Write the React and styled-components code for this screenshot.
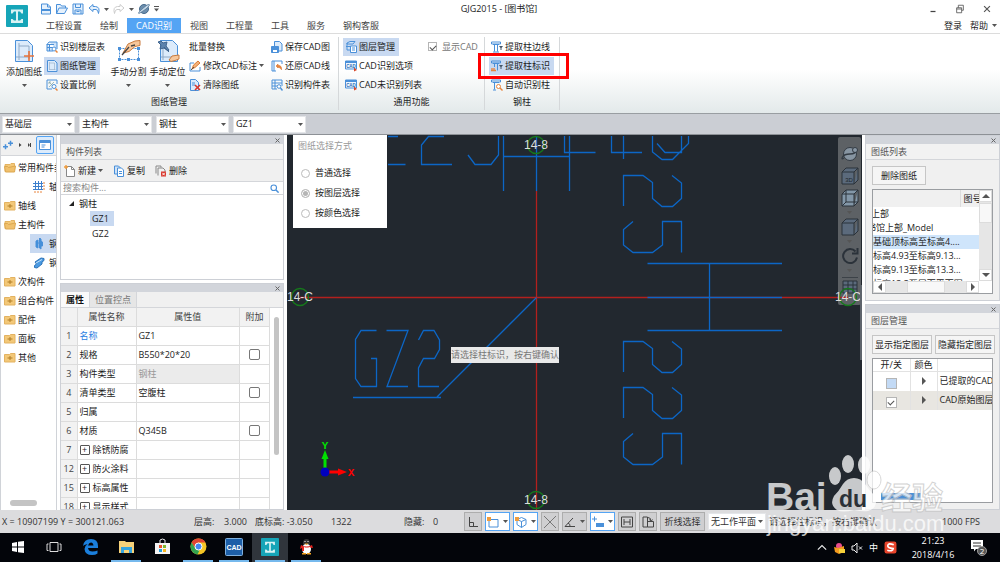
import React from 'react'
import styled, { createGlobalStyle, css } from 'styled-components';

const GlobalStyle = createGlobalStyle`
    * {
        box-sizing: border-box;
    }

    body {
        margin: 0;
        overflow: hidden;
        background: #fff;
        color: #1c1c1c;
        font-family: "Open Sans", "Noto Sans CJK SC", sans-serif;
        font-size: 9px;
        line-height: 12px;
    }

    button, input, select, table {
        font: inherit;
        color: inherit;
    }

    button {
        padding: 0;
        border: 0;
        background: none;
        white-space: nowrap;
    }

    svg {
        display: block;
        flex: none;
    }
`;

const Window = styled.div`
    position: relative;
    display: grid;
    grid-template-rows: 34px 79px 22px minmax(0, 1fr) 23px 29px;
    grid-template-columns: minmax(0, 1fr);
    height: 100vh;
    overflow: hidden;
`;

/* ---------- icons ---------- */

const Svg = ({ size = 12, box = 12, children }) => (
    <svg width={size} height={size} viewBox={`0 0 ${box} ${box}`} fill="none" stroke="#4a90d9" aria-hidden="true">
        {children}
    </svg>
);

const Caret = () => (
    <svg width="5" height="3" viewBox="0 0 5 3" aria-hidden="true"><path d="M0 0h5L2.500 3z" fill="#555" /></svg>
);

const CloseMark = () => (
    <svg width="5" height="5" viewBox="0 0 5 5" aria-hidden="true"><path d="M.5 .5l4 4M4.500 .5l-4 4" stroke="#666" /></svg>
);

const icons = {
    create: <Svg><path d="M1.500 1h6l3 3v7h-9zM7.500 1v3h3" fill="#e6f1fc" /><path d="M1.500 7h9" strokeWidth="2" /></Svg>,
    open: <Svg><path d="M.5 10.500v-9h4l1 1.500h4v2M.5 10.500l2.500-5.500h8.500l-3 5.500z" fill="#e6f1fc" /></Svg>,
    save: <Svg><path d="M1 1h10v10H1z" fill="#e6f1fc" /><path d="M3.500 1v3.500h5V1M3 11V7h6v4M4.500 8.500h3" /></Svg>,
    undo: <Svg><path d="M5 1.500L1 5l4 3.500V6.500h3q2 0 2.500 4q2-6.500-3-7H5z" fill="#e6f1fc" /></Svg>,
    redo: <Svg><path d="M7 1.500L11 5 7 8.500V6.500H4q-2 0-2.500 4Q-.5 4 4.500 3.500H7z" stroke="#ccc" /></Svg>,
    orbit: <Svg><circle cx="6" cy="6" r="4.500" fill="#6d8fae" stroke="#466a8c" /><path d="M2 10Q0 11 .7 9.500T9 2Q12.500 .5 11 3T2 10z" fill="#c4d8e8" stroke="#466a8c" strokeWidth=".7" /></Svg>,
    floorTable: <Svg><path d="M3 1h8v7M1 3.500h7M1 3v7h6M3 1L1 3.500M3.500 4v6M1 6.500h6" fill="#cfe2f7" /><circle cx="8" cy="8" r="2" fill="#fff" /><path d="M9.500 9.500L11.500 11.500" stroke="#e8843c" strokeWidth="1.500" /></Svg>,
    sheet: <Svg><path d="M1.500 .5h7l2.500 2.500v8.500h-9.500z" fill="#dcebfb" /><path d="M3.500 2v8M3.500 9.500h6M3.500 3h5v7" stroke="#9cb3cc" strokeWidth=".7" /></Svg>,
    scale: <Svg><path d="M11 5V1H1v9h5" /><path d="M3 3l5 5M3 3h2M3 3v2M8 3L3 8" stroke="#8aa" strokeWidth=".8" /><circle cx="8" cy="7.500" r="2" fill="#fff" /><path d="M9.500 9.500l2 2" stroke="#e8843c" strokeWidth="1.500" /></Svg>,
    edit: <Svg><path d="M1 3v8h10V7M1 3h4" /><path d="M3 9l1.500-4L9 1l2 2-5 4.500z" fill="#f3b27b" stroke="#d97a35" /><path d="M2 10l3-3" stroke="#555" /></Svg>,
    clear: <Svg><path d="M1.500 .5h5l3 3v8h-8z" fill="#dcebfb" /><path d="M3 4h3M3 6h3" /><path d="M6 6l5 5M11 6l-5 5" stroke="#d9362b" strokeWidth="1.600" /></Svg>,
    saveCad: <Svg><path d="M3.500 5V.5h5l2.500 2.500v7H8" fill="#dcebfb" /><path d="M.5 5.500h7v6h-7z" fill="#4a90d9" /><path d="M2 9h4v2H2z" fill="#fff" stroke="none" /></Svg>,
    restore: <Svg><path d="M11 4V1H1v10h4M3 1v10" /><path d="M5 6l2-2v1.300q4 0 3.500 4.500-1-2.500-3.500-2.500V8z" fill="#e8843c" stroke="#d97a35" strokeWidth=".6" /></Svg>,
    memberTable: <Svg><path d="M1 1h10v6M1 1v9h5M1 4h10M1 7h5M4 1v9" /><circle cx="8" cy="7.500" r="1.800" fill="#fff" /><path d="M9.500 9l2 2.500" stroke="#4a90d9" strokeWidth="1.500" /></Svg>,
    layers: <Svg><path d="M2 2l3-1.500h5L8 3H2zM2 2v7h3M1 5.500h4" fill="#cfe2f7" /><path d="M5.500 5h6v6.500h-6zM7 7h3M7 9h3" fill="#fff" /></Svg>,
    cad: (
        <Svg>
            <path d="M.5 1h11v8H.5z" fill="#eef6ff" />
            <path d="M.5 2h11" strokeWidth="2" />
            <text x="6" y="7.800" textAnchor="middle" fontFamily="Liberation Sans" fontSize="4.500" fontWeight="700" fill="#2b6cb5" stroke="none">CAD</text>
            <path d="M9 7.500l3 2.500-3 1.500z" fill="#d9482b" stroke="none" />
        </Svg>
    ),
    columnEdge: <Svg><path d="M.5 1h9v2h-9zM2 3.500h6M3.500 4v6.500M6.500 4v6.500M2 11h6" /><path d="M8 5h4L10.500 7v2h-1V7z" fill="#456" stroke="none" /></Svg>,
    columnTag: <Svg><path d="M.5 1h9v2h-9zM2 3.500h6M3.500 4v3M6.500 4v6.500" /><path d="M0 10.500h5M1 8v3M3 8v3" stroke="#e8843c" strokeWidth="1.300" /><path d="M8 5h4L10.500 7v2h-1V7z" fill="#456" stroke="none" /></Svg>,
    columnAuto: <Svg><path d="M.5 1h9v2h-9zM2 3.500h6M3.500 4v6.500M2 11h3" /><circle cx="7.500" cy="7.500" r="2" fill="#fff" stroke="#e8843c" /><path d="M9 9l2.500 2.500" stroke="#e8843c" strokeWidth="1.400" /></Svg>,
    folder: <Svg><path d="M.5 2.500h5l1-1h4.500v8.500H.5z" fill="#f3c878" stroke="#e3b261" /><path d="M3.500 6h5M6 4v4" stroke="#b07c24" /></Svg>,
    folderOpen: <Svg><path d="M1 9.500V2.500h5l1-1h3.500v2.500" fill="#f3c878" stroke="#e3b261" /><path d="M.5 4.500h3l1 1 7-1.500-1 6h-9z" fill="#f0c06c" stroke="#dca750" /></Svg>,
    grid: <Svg><path d="M0 2.500h10M0 5.500h10M0 8.500h10M2.500 0v9M5.500 0v9M8.500 0v9" stroke="#3d7fcc" /><path d="M11 1v9M1 11h9" stroke="#e8843c" strokeDasharray="2 1" /></Svg>,
    column: <Svg><path d="M3 3l2-1v8l-2-1zM5 5h1.500M6.500 0l1.500 1v10l-1.500-1zM8 3l1.500 1v4L8 8z" fill="#3d8fdc" /></Svg>,
    beam: <Svg><path d="M2 5l6-4 3 .5v2L9 5v2l-5 4-2.500-.5v-2L3.500 7z" fill="#4b9be3" stroke="#2d73b8" /><path d="M3 6l6-3.500" stroke="#fff" strokeWidth=".7" /></Svg>,
    fresh: <Svg><path d="M2.500 1.500h5l3 3v7h-8z" stroke="#888" fill="#fff" /><path d="M7.500 1.500v3h3" stroke="#888" /><path d="M0 2h4M2 0v4" stroke="#ef9c3e" strokeWidth="1.400" /></Svg>,
    copy: <Svg><path d="M1.500 1h4l2 2v6h-6z" fill="#cfe2f7" /><path d="M4.500 3h4l2 2v6.500h-6zM6 6.500h3M6 8.500h3" fill="#fff" /></Svg>,
    remove: <Svg><path d="M1 8.500V1h5v1.500M3 10.500V3h5l2 2v2" stroke="#888" /><path d="M6 6.500h5v5H6z" fill="#d9362b" stroke="none" /><path d="M7.300 7.800l2.500 2.500M9.800 7.800L7.300 10.300" stroke="#fff" /></Svg>,
};

/* ---------- title bar ---------- */

const Header = styled.header`
    display: flex;
    border-bottom: 1px solid #dcdcdc;
`;

const Brand = styled.div`
    width: 34px;
    padding: 5px 6px;
`;

const HeaderMain = styled.div`
    flex: 1;
    display: grid;
    grid-template-rows: 18px 15px;
    min-width: 0;
`;

const TitleRow = styled.div`
    display: grid;
    grid-template-columns: 1fr auto 1fr;
    align-items: center;
    padding-right: 8px;
`;

const QuickAccess = styled.div`
    display: flex;
    align-items: center;
    gap: 4px;
    padding-left: 6px;
`;

const IconButton = styled.button`
    display: grid;
    place-items: center;
`;

const Title = styled.h1`
    margin: 0 28px 0 0;
    font-size: 9px;
    font-weight: 400;
`;

const WindowButtons = styled.div`
    display: flex;
    justify-content: flex-end;
    gap: 17px;
`;

const TabRow = styled.nav`
    display: flex;
    padding-left: 3px;
`;

const Tab = styled.button`
    height: 15px;
    padding: 0 9px;
    background: ${({ $active }) => ($active ? '#54a4f4' : 'transparent')};
    color: ${({ $active }) => ($active ? '#fff' : '#444')};
`;

const Account = styled.div`
    display: flex;
    align-items: center;
    gap: 8px;
    margin-left: auto;
    padding-right: 3px;

    button {
        display: flex;
        align-items: center;
        gap: 4px;
    }
`;

const BrandLogo = ({ size = 22 }) => (
    <svg width={size} height={size} viewBox="0 0 22 22" aria-hidden="true">
        <rect width="22" height="22" rx="1" fill="#16a5b8" />
        <path d="M5 4.500h12v4h-1.500L14 6.500h-2v9h2l1.500-1.500H17v4H5v-4h1.500L8 15.500h2v-9H8L6.500 8.500H5z" fill="#d9f3f4" />
    </svg>
);

const tabs = ['工程设置', '绘制', 'CAD识别', '视图', '工程量', '工具', '服务', '钢构客服'];

const TitleBar = () => (
    <Header>
        <Brand><BrandLogo /></Brand>
        <HeaderMain>
            <TitleRow>
                <QuickAccess>
                    <IconButton aria-label="新建">{icons.create}</IconButton>
                    <IconButton aria-label="打开">{icons.open}</IconButton>
                    <IconButton aria-label="保存">{icons.save}</IconButton>
                    <IconButton aria-label="撤销">{icons.undo}</IconButton>
                    <Caret />
                    <IconButton aria-label="重做">{icons.redo}</IconButton>
                    <Caret />
                    <IconButton aria-label="动态观察">{icons.orbit}</IconButton>
                    <svg width="5" height="6" viewBox="0 0 5 6" aria-hidden="true"><path d="M0 0h5v1H0zM0 2.500h5L2.500 5.500z" fill="#555" /></svg>
                </QuickAccess>
                <Title>GJG2015 - [图书馆]</Title>
                <WindowButtons>
                    <IconButton aria-label="最小化"><Svg size={10}><path d="M3 9h6" stroke="#444" strokeWidth="1.500" /></Svg></IconButton>
                    <IconButton aria-label="还原"><Svg size={10}><path d="M2 4.500h6v6H2zM4 4.500V1.500h6v6H8M2 6h6" stroke="#555" /></Svg></IconButton>
                    <IconButton aria-label="关闭"><Svg size={10}><path d="M2.500 2.500l7 7M9.500 2.500l-7 7" stroke="#555" strokeWidth="1.400" /></Svg></IconButton>
                </WindowButtons>
            </TitleRow>
            <TabRow>
                {tabs.map(t => <Tab key={t} $active={t === 'CAD识别'}>{t}</Tab>)}
                <Account>
                    <button>登录</button>
                    <button>帮助 <Caret /></button>
                </Account>
            </TabRow>
        </HeaderMain>
    </Header>
);

/* ---------- ribbon ---------- */

const RibbonBar = styled.div`
    display: flex;
    padding-top: 3px;
    background: linear-gradient(#fff 45%, #e3e9ea);
`;

const Group = styled.section`
    display: grid;
    grid-template-rows: 57px 16px;
    padding: 0 4px;
    border-right: 1px solid #d5d8da;
    height: 73px;
`;

const GroupBody = styled.div`
    display: flex;
`;

const GroupName = styled.div`
    text-align: center;
    line-height: 16px;
`;

const Stack = styled.div`
    display: grid;
    grid-template-rows: repeat(3, 19px);
    justify-items: start;
    align-items: center;
    width: ${({ $width }) => $width}px;
`;

const Command = styled.button`
    position: relative;
    display: flex;
    align-items: center;
    gap: 2px;
    height: 18px;
    padding: 0 4px 0 2px;
    background: ${({ $on }) => ($on ? '#c8d9f1' : 'transparent')};
`;

const BigCommand = styled.button`
    display: grid;
    grid-template-rows: 28px 14px 12px;
    place-items: center;
    align-content: start;
    width: ${({ $width }) => $width || 39}px;
`;

const CheckLabel = styled.label`
    display: flex;
    align-items: center;
    gap: 5px;
    height: 19px;
    padding-right: 2px;
    color: #777;
`;

const CheckBox = styled.input.attrs({ type: 'checkbox' })`
    appearance: none;
    display: grid;
    place-items: center;
    width: ${({ $size }) => $size || 9}px;
    height: ${({ $size }) => $size || 9}px;
    margin: 0;
    border: 1px solid ${({ $round }) => ($round ? '#777' : '#b5b5b5')};
    border-radius: ${({ $round }) => ($round ? 2 : 0)}px;
    background: ${({ $fill }) => $fill || '#fff'};

    &:checked::after {
        content: "";
        width: 5px;
        height: 3px;
        border-left: 1px solid #555;
        border-bottom: 1px solid #555;
        transform: rotate(-45deg);
    }
`;

// red frame drawn round the command that the tutorial step points at
const Callout = styled.span`
    position: absolute;
    inset: -4px -15px -4px -11px;
    border: 3px solid #f00;
    pointer-events: none;
`;

const RibbonCommand = ({ icon, label, on, menu, marked }) => (
    <Command $on={on}>
        {icon && icons[icon]}
        {label}
        {menu && <Caret />}
        {marked && <Callout />}
    </Command>
);

const Ribbon = () => (
    <RibbonBar>
        <Group>
            <GroupBody>
                <BigCommand $width={40}>
                    <Svg size={24} box={24}>
                        <path d="M3.500 1.500h12l5 5v16h-17z" fill="#dcebfb" />
                        <path d="M7 4v17M4 18h14M7 7h10v13" stroke="#8fa9c6" />
                        <path d="M17 12v10M12 17h10" stroke="#e8743c" strokeWidth="1.600" />
                    </Svg>
                    添加图纸
                    <Caret />
                </BigCommand>
                <Stack $width={65}>
                    <RibbonCommand icon="floorTable" label="识别楼层表" />
                    <RibbonCommand icon="sheet" label="图纸管理" on />
                    <RibbonCommand icon="scale" label="设置比例" />
                </Stack>
                <BigCommand>
                    <Svg size={24} box={24}>
                        <path d="M2.500 9.500h19v11h-19z" strokeDasharray="2 1" />
                        <path d="M1 8h3v3H1zM20 8h3v3h-3zM1 19h3v3H1zM20 19h3v3h-3zM10 19h3v3h-3z" fill="#4a90d9" stroke="none" />
                        <path d="M6 14l5-9 7-3 5-.5v5l-5 1-6 5z" fill="#f6c79c" stroke="#c97b3e" />
                        <path d="M5 16l7-8M14 7l4-1" stroke="#444" strokeWidth="1.300" />
                    </Svg>
                    手动分割
                    <Caret />
                </BigCommand>
                <BigCommand>
                    <Svg size={24} box={24}>
                        <path d="M4.500 1.500h12l5 5v16h-17z" fill="#dcebfb" />
                        <path d="M7 5v16M5 18h14" stroke="#8fa9c6" />
                        <path d="M2 3l3-1 2 2 4-1-1 4 3 4-1 1-4-3-4 1 1-4z" fill="#5d83ad" stroke="#3f648e" />
                        <path d="M8 8l5 5" stroke="#3f648e" />
                        <path d="M13 21l3-4 7-1v4l-4 1.500-4 1z" fill="#f6c79c" stroke="#c97b3e" />
                    </Svg>
                    手动定位
                    <Caret />
                </BigCommand>
                <Stack $width={82}>
                    <RibbonCommand label="批量替换" />
                    <RibbonCommand icon="edit" label="修改CAD标注" menu />
                    <RibbonCommand icon="clear" label="清除图纸" />
                </Stack>
                <Stack $width={65}>
                    <RibbonCommand icon="saveCad" label="保存CAD图" />
                    <RibbonCommand icon="restore" label="还原CAD线" />
                    <RibbonCommand icon="memberTable" label="识别构件表" />
                </Stack>
            </GroupBody>
            <GroupName>图纸管理</GroupName>
        </Group>
        <Group>
            <GroupBody>
                <Stack $width={85}>
                    <RibbonCommand icon="layers" label="图层管理" on />
                    <RibbonCommand icon="cad" label="CAD识别选项" />
                    <RibbonCommand icon="cad" label="CAD未识别列表" />
                </Stack>
                <CheckLabel><CheckBox defaultChecked disabled />显示CAD</CheckLabel>
            </GroupBody>
            <GroupName>通用功能</GroupName>
        </Group>
        <Group>
            <GroupBody>
                <Stack $width={66}>
                    <RibbonCommand icon="columnEdge" label="提取柱边线" />
                    <RibbonCommand icon="columnTag" label="提取柱标识" on marked />
                    <RibbonCommand icon="columnAuto" label="自动识别柱" />
                </Stack>
            </GroupBody>
            <GroupName>钢柱</GroupName>
        </Group>
    </RibbonBar>
);

/* ---------- selector bar ---------- */

const SelectorBar = styled.div`
    display: flex;
    align-items: center;
    gap: 4px;
    padding: 0 2px;
    border-top: 1px solid #999ea2;
    border-bottom: 1px solid #8d9196;
    background: #cbced4;
`;

const SelectBox = styled.span`
    position: relative;
    width: ${({ $width }) => $width}px;

    select {
        appearance: none;
        display: block;
        width: 100%;
        height: 17px;
        padding: 0 8px 0 2px;
        border: 1px solid #e4e6e9;
        border-radius: 0;
        background: #fff;
    }

    svg {
        position: absolute;
        right: 3px;
        top: 7px;
        pointer-events: none;
    }
`;

const Select = ({ value, label, width = 73 }) => (
    <SelectBox $width={width}>
        <select aria-label={label}><option>{value}</option></select>
        <Caret />
    </SelectBox>
);

/* ---------- workspace ---------- */

const Workspace = styled.main`
    display: grid;
    grid-template-columns: 57px 224px minmax(0, 1fr) 135px;
    grid-template-rows: minmax(0, 1fr);
    column-gap: 3px;
    background: #fff;
`;

const Nav = styled.nav`
    display: flex;
    flex-direction: column;
    border-left: 1px solid #d0d3d8;
    border-right: 1px solid #d0d3d8;
    overflow: hidden;
`;

const NavTop = styled.div`
    display: flex;
    align-items: center;
    justify-content: space-between;
    height: 21px;
    padding: 0 2px;
    border-bottom: 1px solid #d4d6da;
    background: #f0f0f0;
`;

const NavToggle = styled.button`
    padding: 2px;
    border: 1px solid #54a4f4;
    border-radius: 2px;
    background: #dcebfb;
`;

const NavList = styled.ul`
    flex: 1;
    margin: 0;
    padding: 2px 0 0;
    list-style: none;
`;

const NavItem = styled.li`
    display: flex;
    align-items: center;
    gap: ${({ $child }) => ($child ? 4 : 2)}px;
    height: 19px;
    margin-left: ${({ $child }) => ($child ? 29 : 0)}px;
    padding-left: 3px;
    background: ${({ $on }) => ($on ? '#c8d9f1' : 'transparent')};
    white-space: nowrap;
`;

const HorizontalThumb = styled.div`
    width: 27px;
    height: 6px;
    margin: 0 0 4px 9px;
    border-radius: 3px;
    background: #c4c4c4;
`;

const navItems = [
    ['folderOpen', '常用构件类型'],
    ['grid', '轴网', 'child'],
    ['folder', '轴线'],
    ['folderOpen', '主构件'],
    ['column', '钢柱', 'child', 'on'],
    ['beam', '钢梁', 'child'],
    ['folder', '次构件'],
    ['folder', '组合构件'],
    ['folder', '配件'],
    ['folder', '面板'],
    ['folder', '其他'],
];

const Side = styled.div`
    display: flex;
    flex-direction: column;
    gap: 3px;
    min-width: 0;
    overflow: hidden;
`;

const Panel = styled.section`
    display: flex;
    flex-direction: column;
    flex: ${({ $height }) => ($height ? `none` : `1`)};
    height: ${({ $height }) => ($height ? `${$height}px` : 'auto')};
    min-height: 0;
    border: 1px solid #cdd0d6;
    background: ${({ $grey }) => ($grey ? '#f0f0f0' : '#fff')};
`;

const PanelGrip = styled.div`
    display: flex;
    justify-content: flex-end;
    align-items: center;
    height: 8px;
    padding-right: 3px;
    background: #d2d5db;
`;

const PanelTitle = styled.h2`
    height: 16px;
    margin: 0;
    padding-left: 5px;
    border-bottom: 1px solid #d4d6da;
    background: #f2f2f2;
    color: #555;
    font-size: 9px;
    font-weight: 400;
    line-height: 15px;
`;

const ToolRow = styled.div`
    display: flex;
    align-items: center;
    gap: 10px;
    height: 21px;
    padding-left: 3px;
    background: #f0f0f0;

    button {
        display: flex;
        align-items: center;
        gap: 2px;
    }
`;

const SearchRow = styled.label`
    display: flex;
    align-items: center;
    height: 14px;
    padding-right: 4px;
    border: solid #d4d6da;
    border-width: 1px 0;

    input {
        flex: 1;
        min-width: 0;
        height: 12px;
        padding: 0 2px;
        border: 0;
        outline: 0;
    }

    input::placeholder {
        color: #888;
    }
`;

const Tree = styled.ul`
    margin: 0;
    padding: 1px 0 0 6px;
    list-style: none;
    line-height: 15px;

    ul {
        margin: 0;
        padding: 0 0 0 23px;
        list-style: none;
    }
`;

const TreeNode = styled.span`
    display: inline-flex;
    align-items: center;
    gap: 5px;
    height: 15px;
    padding: 0 5px 0 2px;
    background: ${({ $on }) => ($on ? '#c8d9f1' : 'transparent')};
    vertical-align: top;
`;

const PropertyTabs = styled.div`
    display: flex;
    height: 16px;
    background: #f0f0f0;
    border-bottom: 1px solid #d4d6da;
`;

const PropertyTab = styled.button`
    padding: 0 5px;
    border-right: 1px solid #d4d6da;
    background: ${({ $active }) => ($active ? '#fafafa' : '#e6e6e6')};
    color: ${({ $active }) => ($active ? '#111' : '#777')};
    font-weight: ${({ $active }) => ($active ? 600 : 400)};
`;

const PropertyBody = styled.div`
    display: flex;
    flex: 1;
    min-height: 0;
    overflow: hidden;
`;

const PropertyTable = styled.table`
    flex: 1;
    align-self: flex-start;
    table-layout: fixed;
    border-collapse: collapse;

    th, td {
        height: 19px;
        padding: 0 2px;
        border: 1px solid #dcdcdc;
        border-left: 0;
        text-align: left;
        font-weight: 400;
    }

    thead th {
        height: 18px;
        border-top: 0;
        background: #f2f2f2;
        text-align: center;
        color: #444;
    }

    tbody th {
        background: #f2f2f2;
        text-align: center;
        color: #444;
    }

    td input {
        margin: 0 auto;
    }
`;

const NameCell = styled.td`
    color: ${({ $link }) => ($link ? '#2a7de1' : 'inherit')};

    span {
        display: flex;
        align-items: center;
        gap: 3px;
    }
`;

const ValueCell = styled.td`
    ${({ $readOnly }) => $readOnly && css`
        background: #ebebeb;
        color: #999;
    `}
`;

const Expander = styled.button`
    width: 10px;
    height: 10px;
    border: 1px solid #555;
    border-radius: 1px;
    line-height: 7px;
`;

const ScrollTrack = styled.div`
    width: 13px;
    padding: 9px 4px;

    &::after {
        content: "";
        display: block;
        height: 138px;
        border-radius: 3px;
        background: #c4c4c4;
    }
`;

const properties = [
    { no: 1, name: '名称', value: 'GZ1', link: true },
    { no: 2, name: '规格', value: 'B550*20*20', extra: true },
    { no: 3, name: '构件类型', value: '钢柱', readOnly: true },
    { no: 4, name: '清单类型', value: '空腹柱', extra: true },
    { no: 5, name: '归属', value: '' },
    { no: 6, name: '材质', value: 'Q345B', extra: true },
    { no: 7, name: '除锈防腐', group: true },
    { no: 12, name: '防火涂料', group: true },
    { no: 15, name: '标高属性', group: true },
    { no: 18, name: '显示样式', group: true },
];

const Components = () => (
    <Side>
        <Panel $height={145}>
            <PanelGrip><CloseMark /></PanelGrip>
            <PanelTitle>构件列表</PanelTitle>
            <ToolRow>
                <button>{icons.fresh}新建 <Caret /></button>
                <button>{icons.copy}复制</button>
                <button>{icons.remove}删除</button>
            </ToolRow>
            <SearchRow>
                <input placeholder="搜索构件..." aria-label="搜索构件" />
                <Svg size={9}><circle cx="5" cy="5" r="3.700" strokeWidth="1.500" /><path d="M8 8l3.500 3.500" strokeWidth="2" /></Svg>
            </SearchRow>
            <Tree>
                <li>
                    <TreeNode>
                        <svg width="5" height="5" viewBox="0 0 5 5" aria-hidden="true"><path d="M5 0v5H0z" fill="#222" /></svg>
                        钢柱
                    </TreeNode>
                    <ul>
                        <li><TreeNode $on>GZ1</TreeNode></li>
                        <li><TreeNode>GZ2</TreeNode></li>
                    </ul>
                </li>
            </Tree>
        </Panel>
        <Panel>
            <PanelGrip><CloseMark /></PanelGrip>
            <PropertyTabs>
                <PropertyTab $active>属性</PropertyTab>
                <PropertyTab>位置控点</PropertyTab>
            </PropertyTabs>
            <PropertyBody>
                <PropertyTable>
                    <colgroup>
                        <col width="16" />
                        <col width="59" />
                        <col />
                        <col width="30" />
                    </colgroup>
                    <thead>
                        <tr><th></th><th>属性名称</th><th>属性值</th><th>附加</th></tr>
                    </thead>
                    <tbody>
                        {properties.map(p => (
                            <tr key={p.no}>
                                <th>{p.no}</th>
                                <NameCell $link={p.link}>
                                    <span>{p.group && <Expander aria-label="展开">+</Expander>}{p.name}</span>
                                </NameCell>
                                <ValueCell $readOnly={p.readOnly}>{p.value}</ValueCell>
                                <td>{p.extra && <CheckBox $round $size={11} aria-label={`附加 ${p.name}`} />}</td>
                            </tr>
                        ))}
                    </tbody>
                </PropertyTable>
                <ScrollTrack />
            </PropertyBody>
        </Panel>
    </Side>
);

/* ---------- drawing canvas ---------- */

const Canvas = styled.section`
    position: relative;
    overflow: hidden;
    background: #22282f;
`;

const ModelView = styled.svg`
    position: absolute;
    inset: 0;
    width: 100%;
    height: 100%;
`;

const SelectionMode = styled.fieldset`
    position: absolute;
    left: 6px;
    top: 0;
    display: grid;
    gap: 8px;
    width: 94px;
    height: 93px;
    align-content: start;
    margin: 0;
    padding: 5px 5px 0;
    border: 0;
    background: #fff;
`;

const ModeTitle = styled.div`
    height: 19px;
    color: #999;
`;

const Mode = styled.label`
    display: flex;
    align-items: center;
    gap: 5px;
    height: 12px;
    padding-left: 3px;
`;

const Radio = styled.input.attrs({ type: 'radio', name: 'mode' })`
    appearance: none;
    width: 9px;
    height: 9px;
    margin: 0;
    border: 1px solid #bbb;
    border-radius: 50%;

    &:checked {
        background: #b5b5b5;
        box-shadow: inset 0 0 0 1px #fff;
    }
`;

const CursorTip = styled.div`
    position: absolute;
    left: 164px;
    top: 212px;
    height: 16px;
    background: #e9e9e9;
    color: #777;
    line-height: 16px;
    white-space: nowrap;
`;

const ViewTools = styled.div`
    position: absolute;
    right: 1px;
    top: 2px;
    display: grid;
    justify-items: center;
    align-content: start;
    gap: 4px;
    width: 23px;
    height: 168px;
    padding-top: 8px;
    border-radius: 2px;
    background: #5d6165;
`;

const EdgeHandle = styled.i`
    position: absolute;
    top: 150px;
    ${({ $side }) => $side}: 0;
    width: 2px;
    height: 75px;
    background: #5f656d;
`;

const Cube = ({ light, label }) => (
    <Svg size={18} box={18}>
        <path d="M1 5h12v12H1zM1 5l4-4h12l-4 4M17 1v12l-4 4" fill={light ? '#8397a8' : '#5b6a7c'} stroke="#2b323a" />
        {light && <path d="M5 1v12h12M5 13l-4 4" stroke="#2b323a" />}
        {label && <text x="8" y="15" textAnchor="middle" fontFamily="Liberation Sans" fontSize="6" fill="#20262d" stroke="none">{label}</text>}
    </Svg>
);

const two = 'M623.500 206V175.500H643L652.500 182.500V198.500L662 206.500H672.500L681.500 198.500V183L672 175.500';
const five = 'M633 221.500L623.500 229.500V245L633 252.500H652.500L662.500 245V221.500H681.500V252.500';

const axes = [
    ['14-8', 536, 145],
    ['14-8', 536, 500],
    ['14-C', 300, 297],
    ['14-C', 848, 297],
];

const Drawing = () => (
    <ModelView role="img" aria-label="模型视图">
        <g transform="translate(-287 -135)" fill="none" strokeWidth="1.300">
            <path d="M300 297.500H848M536.500 191V510" stroke="#b3201e" />
            <g stroke="#0c66c6">
                <path d="M388 136.500H398M388 164.500H405.500M444 136.500H428.500L421.500 145V164.500H452" />
                <path d="M468 155L475 164.500H491L498.500 155V136" />
                <path d="M503.500 136V191M569.500 136V191M503.500 156.500H569.500M536.500 136V191" />
                <path d="M564.500 136V152.500H595.500M611.500 136V152.500H642M623.500 136V159" />
                <path d="M652.500 136V152L662 159.500H672.500L688.500 143.500V136M657 143.500L665 152.500H681.500V136" />
                <path d={two} />
                <path d={five} />
                <path d="M647.500 263.500H782M647.500 297.500H782M647.500 330.500H782M709.500 263.500V330" />
                <path d={two} transform="translate(0 166)" />
                <path d={two} transform="translate(0 212)" />
                <path d={five} transform="translate(0 212)" />
                <path d="M376.500 330.500H361L355.500 339.500V378.500L361 386.500H376.500V358.500H371" />
                <path d="M386.500 330.500H408L387 386.500H408" />
                <path d="M418.500 340L423.500 330.500H434L439.500 340V349.500L434.500 358.500H423.500L418.500 368V386.500H439" />
                <path d="M353 397.500H441M437 397L536.500 297.500" />
            </g>
            {axes.map(([label, x, y]) => (
                <g key={`${x}-${y}`}>
                    <circle cx={x} cy={y} r="8.500" stroke="#157a1b" />
                    <text x={x} y={y + 4} textAnchor="middle" fill="#ddd" fontFamily="Liberation Sans" fontSize="12">{label}</text>
                </g>
            ))}
            <path d="M325 470V458" stroke="#00e000" strokeWidth="3" />
            <path d="M325 450l3.500 9h-7z" fill="#00e000" />
            <path d="M326 472H339" stroke="#f00" strokeWidth="3" />
            <path d="M347 472l-9 3.500v-7z" fill="#f00" />
            <circle cx="325" cy="472" r="4.500" fill="#0000c0" />
            <text x="325" y="449" textAnchor="middle" fill="#00e000" fontFamily="Liberation Mono" fontSize="11" fontWeight="700">Y</text>
            <text x="351" y="476" textAnchor="middle" fill="#f00" fontFamily="Liberation Mono" fontSize="11" fontWeight="700">X</text>
        </g>
    </ModelView>
);

const CanvasArea = () => (
    <Canvas>
        <ViewTools>
            <Svg size={18} box={18}>
                <circle cx="9" cy="9" r="6.500" fill="#8795a2" stroke="#333b44" />
                <path d="M3 13Q0 15 1.500 12T9 9t7-5" stroke="#333b44" strokeWidth="1.300" />
                <circle cx="14" cy="5" r="2.500" fill="#8997a4" stroke="#333b44" />
            </Svg>
            <Cube label="3D" />
            <Cube light />
            <Caret />
            <Cube />
            <Caret />
            <Svg size={18} box={18}><path d="M14.500 4.500a7 7 0 1 0 1.500 6M16.500 1v5.500h-5.500" stroke="#2b323a" strokeWidth="2" /></Svg>
            <Caret />
            <Svg size={18} box={18}><path d="M1 1.500h16" stroke="#3c4248" /><path d="M2 5h14v12H2zM2 9h14M2 13h14M7 5v12M12 5v12" fill="#5b6a7c" stroke="#2b323a" /></Svg>
        </ViewTools>
        <Drawing />
        <EdgeHandle $side="right" />
        <SelectionMode aria-label="图纸选择方式">
            <ModeTitle>图纸选择方式</ModeTitle>
            <Mode><Radio />普通选择</Mode>
            <Mode><Radio defaultChecked />按图层选择</Mode>
            <Mode><Radio />按颜色选择</Mode>
        </SelectionMode>
        <CursorTip>请选择柱标识，按右键确认</CursorTip>
    </Canvas>
);

/* ---------- right side ---------- */

const PushButton = styled.button`
    height: 19px;
    padding: 0 ${({ $wide }) => ($wide ? 8 : 2)}px;
    border: 1px solid #c6c6c6;
    background: #f5f5f5;
`;

const PanelBody = styled.div`
    display: flex;
    flex-direction: column;
    flex: 1;
    gap: 4px;
    min-height: 0;
    padding: 6px;
`;

const ButtonRow = styled.div`
    display: flex;
    gap: 3px;
`;

const ListFrame = styled.div`
    display: grid;
    grid-template-columns: minmax(0, 1fr) 13px;
    grid-template-rows: minmax(0, 1fr) 12px;
    height: 105px;
    border: 1px solid #9a9da1;
    background: #fff;
`;

const ListView = styled.div`
    overflow: hidden;
`;

const SheetTable = styled.table`
    width: 100%;
    table-layout: fixed;
    border-collapse: collapse;
    white-space: nowrap;

    th {
        height: 17px;
        padding: 0 3px;
        background: #f0f0f0;
        font-weight: 400;
        text-align: left;
    }

    th + th {
        border-left: 1px solid #dcdcdc;
    }

    td {
        height: 14px;
        padding: 0;
    }
`;

const SheetRow = styled.tr`
    background: ${({ $on }) => ($on ? '#cfe5fb' : '#fff')};

    td {
        text-indent: ${({ $shift }) => $shift || 0}px;
    }
`;

const ScrollBar = styled.div`
    display: flex;
    flex-direction: ${({ $vertical }) => ($vertical ? 'column' : 'row')};
    justify-content: space-between;
    background: #e6e6e6;

    button {
        display: grid;
        place-items: center;
        width: 13px;
        height: 12px;
        border: 1px solid #dcdcdc;
        background: #fff;
    }
`;

const Thumb = styled.div`
    flex: none;
    width: ${({ $width }) => $width}px;
    height: ${({ $height }) => $height}px;
    margin-bottom: ${({ $gap }) => $gap || 0}px;
    border: 1px solid #dcdcdc;
    background: #f8f8f8;
`;

const Arrow = ({ d }) => (
    <svg width="8" height="8" viewBox="0 0 8 8" aria-hidden="true"><path d={d} fill="#555" /></svg>
);

const LayerFrame = styled.div`
    flex: 1;
    display: flex;
    flex-direction: column;
    justify-content: space-between;
    overflow: hidden;
    border: 1px solid #9a9da1;
    background: #fff;
`;

const LayerTable = styled.table`
    width: 100%;
    table-layout: fixed;
    border-collapse: collapse;
    white-space: nowrap;

    th {
        height: 12px;
        padding: 0;
        font-weight: 400;
        border-bottom: 1px solid #e2e2e2;
    }

    td {
        height: 19px;
        padding: 0 2px;
        overflow: hidden;
    }

    th + th, td + td {
        border-left: 1px solid #e2e2e2;
    }

    td input, td svg {
        margin: 0 auto;
    }

    td input {
        position: relative;
        top: 2px;
    }
`;

const LayerRow = styled.tr`
    background: ${({ $alt }) => ($alt ? '#e8e6e1' : '#fff')};
`;

const LayerThumb = styled.div`
    width: 40px;
    height: 7px;
    margin: 0 0 2px 8px;
    background: #4c8fd6;
`;

const sheets = [
    ['上部', -2],
    ['书馆上部_Model', -6],
    ['基础顶标高至标高4....', 0, true],
    ['标高4.93至标高9.13...', 0],
    ['标高9.13至标高13.3...', 0],
    ['标高13.3至屋面平面图', 0],
];

const Drawings = () => (
    <Side>
        <Panel $grey $height={166}>
            <PanelGrip><CloseMark /></PanelGrip>
            <PanelTitle>图纸列表</PanelTitle>
            <PanelBody>
                <ButtonRow><PushButton $wide>删除图纸</PushButton></ButtonRow>
                <ListFrame>
                    <ListView>
                        <SheetTable>
                            <colgroup><col /><col width="19" /></colgroup>
                            <thead><tr><th></th><th>图号</th></tr></thead>
                            <tbody>
                                {sheets.map(([name, shift, on]) => (
                                    <SheetRow key={name} $shift={shift} $on={on}><td colSpan="2">{name}</td></SheetRow>
                                ))}
                            </tbody>
                        </SheetTable>
                    </ListView>
                    <ScrollBar $vertical>
                        <button aria-label="向上"><Arrow d="M0 6h8L4 2z" /></button>
                        <Thumb $width={13} $height={20} $gap={46} />
                        <button aria-label="向下"><Arrow d="M0 2h8L4 6z" /></button>
                    </ScrollBar>
                    <ScrollBar>
                        <button aria-label="向左"><Arrow d="M6 0v8L2 4z" /></button>
                        <Thumb $width={38} $height={12} />
                        <button aria-label="向右"><Arrow d="M2 0v8l4-4z" /></button>
                    </ScrollBar>
                </ListFrame>
            </PanelBody>
        </Panel>
        <Panel $grey>
            <PanelGrip><CloseMark /></PanelGrip>
            <PanelTitle>图层管理</PanelTitle>
            <PanelBody>
                <ButtonRow>
                    <PushButton>显示指定图层</PushButton>
                    <PushButton>隐藏指定图层</PushButton>
                </ButtonRow>
                <LayerFrame>
                    <LayerTable>
                        <colgroup><col width="37" /><col width="27" /><col /></colgroup>
                        <thead><tr><th>开/关</th><th>颜色</th><th></th></tr></thead>
                        <tbody>
                            <LayerRow>
                                <td><CheckBox $size={11} $fill="#c3daf5" aria-label="已提取的CAD" /></td>
                                <td><Arrow d="M2 0v8l4-4z" /></td>
                                <td>已提取的CAD</td>
                            </LayerRow>
                            <LayerRow $alt>
                                <td><CheckBox $size={11} defaultChecked aria-label="CAD原始图层" /></td>
                                <td><Arrow d="M2 0v8l4-4z" /></td>
                                <td>CAD原始图层</td>
                            </LayerRow>
                        </tbody>
                    </LayerTable>
                    <LayerThumb />
                </LayerFrame>
            </PanelBody>
        </Panel>
    </Side>
);

/* ---------- status bar ---------- */

const StatusBar = styled.footer`
    display: flex;
    align-items: center;
    gap: 3px;
    padding: 0 20px 0 2px;
    background: #dcdcde;
    color: #333;
    white-space: nowrap;
`;

const Readout = styled.span`
    flex: none;
    width: ${({ $width }) => $width}px;
`;

const StatusButton = styled.button`
    display: flex;
    align-items: center;
    justify-content: center;
    gap: 4px;
    flex: none;
    width: ${({ $width }) => $width || 18}px;
    height: 19px;
    border: 1px solid ${({ $on }) => ($on ? '#54a4f4' : '#adadad')};
    background: ${({ $on }) => ($on ? '#fff' : '#cfcfd1')};
`;

const Hint = styled.span`
    flex: 1;
`;

const Status = () => (
    <StatusBar>
        <Readout $width={189}>X = 10907199 Y = 300121.063</Readout>
        <Readout $width={27}>层高:</Readout>
        <Readout $width={28}>3.000</Readout>
        <Readout $width={73}>底标高: -3.050</Readout>
        <Readout $width={70}>1322</Readout>
        <Readout $width={26}>隐藏:</Readout>
        <Readout $width={28}>0</Readout>
        <StatusButton aria-label="正交"><Svg><path d="M2.500 1v9.500H11M3 6.500h3.500v4" stroke="#444" /></Svg></StatusButton>
        <StatusButton $on $width={25} aria-label="框选"><Svg><path d="M2 3.500h9v7.500H2z" /><path d="M0 1h4v4H0z" fill="#ef9c3e" stroke="none" /></Svg><Caret /></StatusButton>
        <StatusButton $on $width={25} aria-label="三维"><Svg><path d="M6.500 1.500l4.500 2v5l-4.500 3-4.500-3v-5zM2 3.500l4.500 2 4.500-2M6.500 5.500v6" /><path d="M0 1h4v4H0z" fill="#ef9c3e" stroke="none" /></Svg><Caret /></StatusButton>
        <StatusButton aria-label="交点"><Svg><path d="M0 0l12 12M12 0L0 12" stroke="#777" /></Svg></StatusButton>
        <StatusButton $width={25} aria-label="角度"><Svg><path d="M9 2L1 10.500h10M4 7q2.500 1 2 3.500" stroke="#444" /></Svg><Caret /></StatusButton>
        <StatusButton $on $width={25} aria-label="动态输入"><Svg><path d="M0 3h5M2.500 .5v5" /><path d="M4 7h8v4H4z" fill="#4a90d9" stroke="none" /></Svg><Caret /></StatusButton>
        <StatusButton aria-label="标注"><Svg><path d="M.5 1h11v10H.5zM3 3v6M9 3v6M3 6h6" stroke="#444" /></Svg></StatusButton>
        <StatusButton aria-label="布局"><Svg><path d="M1 1h4.500v10H1zM5.500 5.500h6V11h-6M6 1.500q3 0 3 3.500M7.500 3.500L9 5.500l1.500-2" stroke="#444" /></Svg></StatusButton>
        <StatusButton $width={45}>折线选择</StatusButton>
        <Select value="无工作平面" label="工作平面" width={58} />
        <Hint>请选择柱标识，按右键确认</Hint>
        <span>1000 FPS</span>
    </StatusBar>
);

/* ---------- taskbar ---------- */

const Taskbar = styled.div`
    display: flex;
    background: #03050a;
    color: #fff;
`;

const Task = styled.button`
    display: grid;
    place-items: center;
    width: 36px;
    border-bottom: 2px solid transparent;
    background: ${({ $active }) => ($active ? '#30353c' : 'transparent')};
    ${({ $open }) => $open && css`
        border-image: linear-gradient(to right, transparent 10%, #76b9ed 10%, #76b9ed 90%, transparent 90%) 1;
    `}
`;

const Tray = styled.div`
    display: flex;
    align-items: center;
    gap: 6px;
    margin-left: auto;
    padding-right: 12px;
`;

const Clock = styled.time`
    width: 60px;
    text-align: center;
    line-height: 14px;
`;

const tasks = [
    ['开始', <Svg size={14} box={14}><path d="M1 3l5-1v4.500H1zM7 1.800L13 1v5.500H7zM1 7.500h5V12l-5-1zM7 7.500h6V13l-6-.8z" fill="#fff" stroke="none" /></Svg>],
    ['任务视图', <Svg size={16} box={16}><path d="M4 3.500h8v9H4zM2.500 5H1v6.500h1.500M13.500 5H15v6.500h-1.500" stroke="#ddd" /></Svg>],
    ['Edge', <Svg size={17} box={17}><path d="M1 8Q2 1 9 1q7 0 7 7v2H6q.5 3.500 4.500 3.500 3 0 5-1v3q-2 1.500-5.500 1.500-7 0-7.500-6 0-3 3-5-4 1-4.500 2z" fill="#1b7fdc" stroke="none" /><path d="M6 7.500h5.500Q11 4.500 9 4.500T6 7.500z" fill="#03050a" stroke="none" /></Svg>],
    ['资源管理器', <Svg size={17} box={17}><path d="M1 3h6l1 1h8v11H1z" fill="#f6d27a" stroke="none" /><path d="M3 9h11v6h-3v-3H6v3H3z" fill="#35a5df" stroke="none" /></Svg>, true],
    ['应用商店', <Svg size={17} box={17}><path d="M6 5V2q2.500-2 5 0v3" stroke="#eee" /><path d="M1 5h15v11H1z" fill="#f4f4f4" stroke="none" /><path d="M5 7h3v3H5z" fill="#e8512b" stroke="none" /><path d="M9 7h3v3H9z" fill="#7db72f" stroke="none" /><path d="M5 11h3v3H5z" fill="#249fda" stroke="none" /><path d="M9 11h3v3H9z" fill="#f6b51e" stroke="none" /></Svg>],
    ['Chrome', <Svg size={17} box={17}><circle cx="8.500" cy="8.500" r="8" fill="#f4c525" stroke="none" /><path d="M1.600 4.500A8 8 0 0 1 15.500 4.500H8.500L5 10z" fill="#e04434" stroke="none" /><path d="M1.600 4.500L6 11.500l3.500 1-2 4A8 8 0 0 1 1.600 4.500z" fill="#31a350" stroke="none" /><circle cx="8.500" cy="8.500" r="3.500" fill="#4587f2" stroke="#fff" /></Svg>, true],
    ['CAD', <Svg size={18} box={18}><rect x=".5" y=".5" width="17" height="17" rx="1" fill="#1d5fa8" stroke="#7fb0de" /><text x="9" y="12" textAnchor="middle" fontFamily="Liberation Sans" fontSize="7" fontWeight="700" fill="#fff" stroke="none">CAD</text></Svg>, true],
    ['GJG2015', <BrandLogo size={18} />, true, true],
    ['QQ', <Svg size={17} box={17}><ellipse cx="8.500" cy="5" rx="3.500" ry="4" fill="#333" stroke="none" /><ellipse cx="8.500" cy="11" rx="4.500" ry="5" fill="#fff" stroke="none" /><path d="M3 7q5.500 3 11 0l1 3q-3 0-3-1-4 1-6 0v4H4v-3l-2 1z" fill="#e0201c" stroke="none" /><path d="M6.500 5.500h4L8.500 7zM4 15h4v1.500H4zM9 15h4v1.500H9z" fill="#f3a21d" stroke="none" /><path d="M7 3v1M10 3v1" stroke="#fff" /></Svg>, true],
];

const WindowsBar = () => (
    <Taskbar>
        {tasks.map(([name, icon, open, active]) => (
            <Task key={name} aria-label={name} $open={open} $active={active}>{icon}</Task>
        ))}
        <Tray>
            <Svg size={10}><path d="M1 8l5-5 5 5" stroke="#eee" strokeWidth="1.300" /></Svg>
            <Svg><circle cx="6" cy="4" r="3" fill="#e94e8c" stroke="none" /><path d="M1 5l4 1 6-2v6l-5 2-4-2z" fill="#f39a1f" stroke="none" /><path d="M6 7h6v4H6z" fill="#f6d13a" stroke="none" /></Svg>
            <Svg><path d="M1 4h2l3-3v10L3 8H1zM8 4.500l3 3M11 4.500l-3 3" stroke="#eee" /></Svg>
            <span>中</span>
            <Svg size={13}><rect x=".5" y=".5" width="11" height="11" rx="2" fill="#e8452c" stroke="none" /><path d="M9 3.500Q4 1.500 3.500 4t5 3Q8 10 3 8.500" stroke="#fff" strokeWidth="1.500" /></Svg>
            <Clock>21:23<br />2018/4/16</Clock>
            <Svg size={19} box={19}><path d="M2 2h12v9H7l-2 2.500V11H2z" fill="#fff" stroke="none" /><path d="M4 5h8M4 8h8" stroke="#333" /><circle cx="13" cy="13" r="4.500" fill="#555" stroke="#999" /><text x="13" y="16" textAnchor="middle" fontSize="8" fill="#fff" stroke="none">2</text></Svg>
        </Tray>
    </Taskbar>
);

/* ---------- watermark ---------- */

const Watermark = styled.svg`
    position: absolute;
    right: 47px;
    bottom: 14px;
    pointer-events: none;
`;

const BaiduMark = () => (
    <Watermark width="190" height="100" viewBox="0 0 190 100" fontFamily="Liberation Sans" aria-hidden="true">
        <g fill="#fff" opacity=".75">
            <text x="3" y="62" fontSize="39" fontWeight="700">Bai</text>
            <ellipse cx="72" cy="28" rx="6" ry="9" />
            <ellipse cx="85" cy="16" rx="6" ry="9" />
            <ellipse cx="101" cy="17" rx="6" ry="9" />
            <ellipse cx="111" cy="32" rx="7" ry="9" stroke="#ccc" />
            <path d="M91 30q7 0 11 6t9 11q6 12-6 16-5 1-14-1-12 3-17 0-8-5-3-14 5-5 9-12 4-6 11-6z" />
            <text x="118" y="61" fontSize="31" fontWeight="700" fontFamily="Noto Sans CJK SC" stroke="#c4c4c4" strokeWidth="1">经验</text>
            <text x="4" y="83" fontSize="22">jingyan.baidu.com</text>
        </g>
        <text x="76" y="59" fontSize="23" fontWeight="700" fill="#2b3137">du</text>
    </Watermark>
);

export default function App() {
    return (
        <Window>
            <GlobalStyle />
            <TitleBar />
            <Ribbon />
            <SelectorBar>
                <Select value="基础层" label="楼层" />
                <Select value="主构件" label="构件分类" />
                <Select value="钢柱" label="构件类型" />
                <Select value="GZ1" label="构件" />
            </SelectorBar>
            <Workspace>
                <Nav>
                    <NavTop>
                        <Svg size={10}><path d="M0 8h6M3 5v6M6 4h6M9 1v6" strokeWidth="1.800" /></Svg>
                        <Svg size={12}><path d="M0 4v4l2.500-2zM9 4v4l2-2zM11 4h1v4h-1z" fill="#444" stroke="none" /></Svg>
                        <NavToggle aria-label="切换视图"><Svg><path d="M.5 1.500h11v9H.5zM2.500 6h4M2.500 8h3" fill="#fff" /><path d="M1 3h10" strokeWidth="2" /></Svg></NavToggle>
                    </NavTop>
                    <NavList>
                        {navItems.map(([icon, label, child, on]) => (
                            <NavItem key={label} $child={child} $on={on}>{icons[icon]}{label}</NavItem>
                        ))}
                    </NavList>
                    <HorizontalThumb />
                </Nav>
                <Components />
                <CanvasArea />
                <Drawings />
            </Workspace>
            <Status />
            <WindowsBar />
            <BaiduMark />
        </Window>
    );
}
